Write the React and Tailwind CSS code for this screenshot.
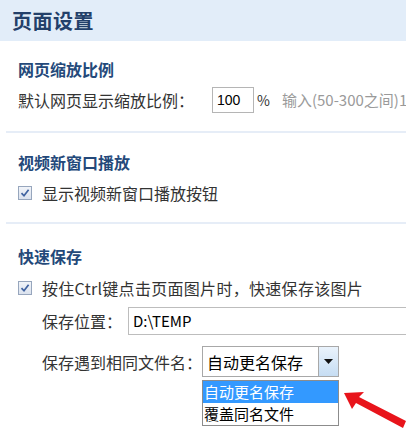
import React from "react";

const font = { fontFamily: '"Microsoft YaHei", "Noto Sans CJK SC", "Liberation Sans", sans-serif' };

function Check() {
  return (
    <span className="w-[14px] h-[14px] border border-[#97a6bd] bg-gradient-to-b from-[#f1f4f9] to-[#dbe2ee] flex items-center justify-center shrink-0">
      <svg width="10" height="10" viewBox="0 0 10 10">
        <path d="M1.5 5.2 L4 7.8 L8.6 1.8" fill="none" stroke="#3f62a0" strokeWidth="1.7" />
      </svg>
    </span>
  );
}

function Divider() {
  return <div className="ml-[6px] h-[2px] bg-[#e6edf7]" />;
}

export default function App() {
  return (
    <div className="w-[406px] h-[447px] bg-white overflow-hidden relative text-[#333]" style={font}>
      <div className="h-[41px] bg-[#e2edf9] flex items-center pl-[12px]">
        <h1 className="text-[20px] font-bold text-[#23406a] tracking-[0.5px]">页面设置</h1>
      </div>

      <div className="px-[18px] pt-[16px] pb-[18px]">
        <div className="text-[16px] font-bold text-[#24497a] leading-[24px]">网页缩放比例</div>
        <div className="flex items-center mt-[6px] text-[16px] whitespace-nowrap">
          <span className="shrink-0">默认网页显示缩放比例：</span>
          <span className="shrink-0 ml-[18px] w-[42px] h-[26px] border border-[#b5b5b5] flex items-center pl-[4px] text-[14px] text-black" style={{ fontFamily: '"Liberation Sans", sans-serif' }}>100</span>
          <span className="shrink-0 ml-[3px] text-[14px]">%</span>
          <span className="shrink-0 ml-[12px] text-[15px] text-[#9a9a9a]">输入(50-300之间)1</span>
        </div>
      </div>
      <Divider />

      <div className="px-[18px] pt-[17px] pb-[17px]">
        <div className="text-[16px] font-bold text-[#24497a] leading-[24px]">视频新窗口播放</div>
        <div className="flex items-center mt-[7px] gap-[10px] text-[16px]">
          <Check />
          <span>显示视频新窗口播放按钮</span>
        </div>
      </div>
      <Divider />

      <div className="px-[18px] pt-[20px]">
        <div className="text-[16px] font-bold text-[#24497a] leading-[24px]">快速保存</div>
        <div className="flex items-center mt-[8px] gap-[10px] text-[16px] whitespace-nowrap">
          <Check />
          <span className="tracking-[0.3px]">按住Ctrl键点击页面图片时，快速保存该图片</span>
        </div>
        <div className="flex items-center mt-[7px] pl-[24px] text-[16px] whitespace-nowrap">
          <span>保存位置：</span>
          <span className="ml-[6px] flex-1 h-[28px] border border-[#bdbdbd] border-r-0 -mr-[18px] flex items-center pl-[4px] text-[15px] text-black">D:\TEMP</span>
        </div>
        <div className="flex items-start mt-[11px] pl-[24px] text-[16px] whitespace-nowrap">
          <span className="mt-[4px]">保存遇到相同文件名：</span>
          <div className="relative">
            <div className="w-[137px] h-[31px] border border-[#a8a8a8] flex items-center">
              <span className="flex-1 pl-[4px] text-[16px] text-black">自动更名保存</span>
              <span className="w-[20px] h-[29px] border-l border-[#a8a8a8] bg-gradient-to-b from-[#eaf3fc] to-[#c6ddf3] flex items-center justify-center">
                <svg width="9" height="5" viewBox="0 0 9 5"><path d="M0 0 H9 L4.5 5 Z" fill="#111" /></svg>
              </span>
            </div>
            <div className="absolute left-0 top-[34px] w-[137px] border border-[#8c8c8c] bg-white">
              <div className="h-[22px] leading-[22px] bg-[#3399ff] text-white pl-[1px] text-[15px]">自动更名保存</div>
              <div className="h-[22px] leading-[22px] pl-[1px] text-[15px] text-black">覆盖同名文件</div>
            </div>
          </div>
        </div>
      </div>

      <svg className="absolute left-[340px] top-[385px]" width="66" height="45" viewBox="0 0 66 45">
        <path d="M4 8 L24 7 L19 12 L66 36 L63 43 L16 18 L12 24 Z" fill="#e8141b" />
      </svg>
    </div>
  );
}
